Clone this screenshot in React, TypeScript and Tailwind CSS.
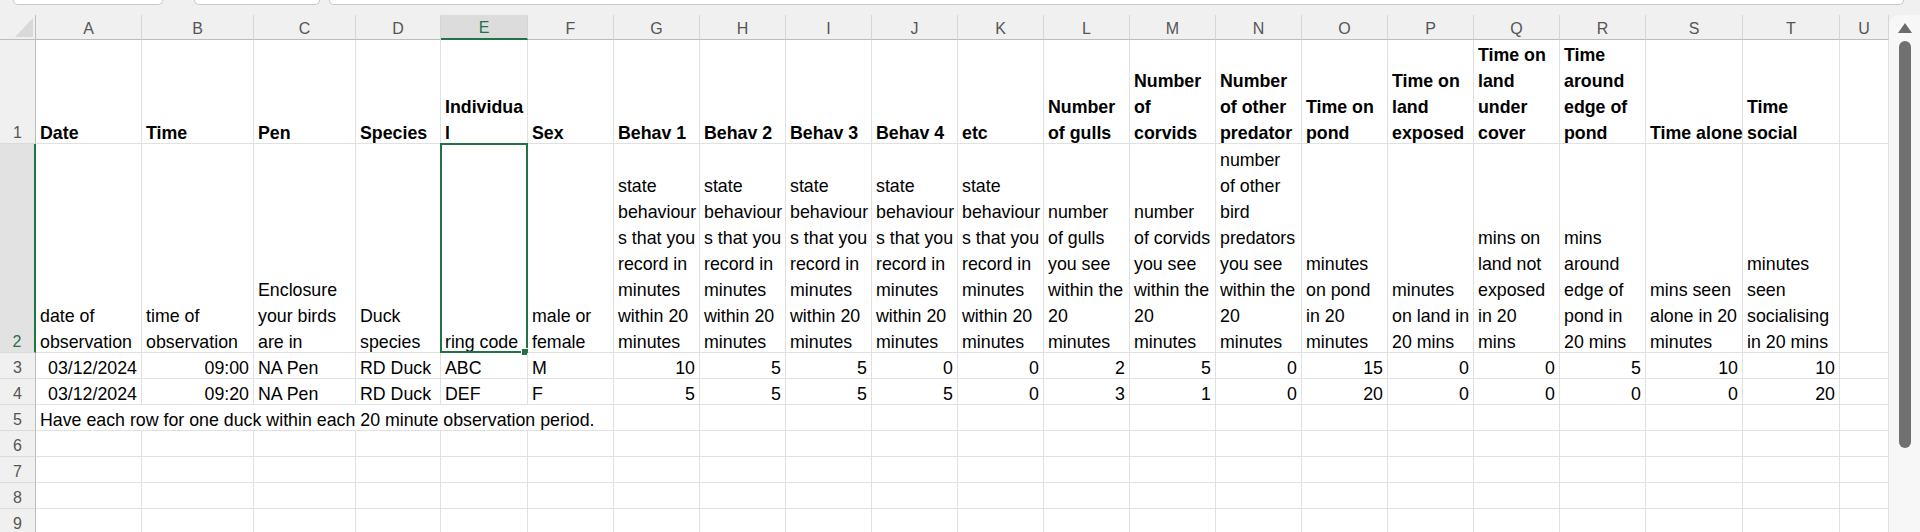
import { Fragment } from 'react'

type CellDef = {
  lines?: string[]
  bold?: boolean
  right?: boolean
  span?: number
}

const COLS = ['A', 'B', 'C', 'D', 'E', 'F', 'G', 'H', 'I', 'J', 'K', 'L', 'M', 'N', 'O', 'P', 'Q', 'R', 'S', 'T', 'U']

const h = (...lines: string[]): CellDef => ({ lines, bold: true })
const t = (...lines: string[]): CellDef => ({ lines })
const n = (v: string): CellDef => ({ lines: [v], right: true })
const empty = (): CellDef => ({})

const behaviour = () => t('state', 'behaviour', 's that you', 'record in', 'minutes', 'within 20', 'minutes')

const rows: CellDef[][] = [
  [
    h('Date'), h('Time'), h('Pen'), h('Species'), h('Individua', 'l'), h('Sex'),
    h('Behav 1'), h('Behav 2'), h('Behav 3'), h('Behav 4'), h('etc'),
    h('Number', 'of gulls'), h('Number', 'of', 'corvids'), h('Number', 'of other', 'predator'),
    h('Time on', 'pond'), h('Time on', 'land', 'exposed'), h('Time on', 'land', 'under', 'cover'),
    h('Time', 'around', 'edge of', 'pond'), h('Time alone'), h('Time', 'social'), empty(),
  ],
  [
    t('date of', 'observation'), t('time of', 'observation'), t('Enclosure', 'your birds', 'are in'),
    t('Duck', 'species'), t('ring code'), t('male or', 'female'),
    behaviour(), behaviour(), behaviour(), behaviour(), behaviour(),
    t('number', 'of gulls', 'you see', 'within the', '20', 'minutes'),
    t('number', 'of corvids', 'you see', 'within the', '20', 'minutes'),
    t('number', 'of other', 'bird', 'predators', 'you see', 'within the', '20', 'minutes'),
    t('minutes', 'on pond', 'in 20', 'minutes'),
    t('minutes', 'on land in', '20 mins'),
    t('mins on', 'land not', 'exposed', 'in 20', 'mins'),
    t('mins', 'around', 'edge of', 'pond in', '20 mins'),
    t('mins seen', 'alone in 20', 'minutes'),
    t('minutes', 'seen', 'socialising', 'in 20 mins'),
    empty(),
  ],
  [
    n('03/12/2024'), n('09:00'), t('NA Pen'), t('RD Duck'), t('ABC'), t('M'),
    n('10'), n('5'), n('5'), n('0'), n('0'), n('2'), n('5'), n('0'),
    n('15'), n('0'), n('0'), n('5'), n('10'), n('10'), empty(),
  ],
  [
    n('03/12/2024'), n('09:20'), t('NA Pen'), t('RD Duck'), t('DEF'), t('F'),
    n('5'), n('5'), n('5'), n('5'), n('0'), n('3'), n('1'), n('0'),
    n('20'), n('0'), n('0'), n('0'), n('0'), n('20'), empty(),
  ],
  [
    { lines: ['Have each row for one duck within each 20 minute observation period.'], span: 6 },
    ...Array.from({ length: 15 }, empty),
  ],
  Array.from({ length: 21 }, empty),
  Array.from({ length: 21 }, empty),
  Array.from({ length: 21 }, empty),
  Array.from({ length: 21 }, empty),
]

function Cell({ cell, selected }: { cell: CellDef; selected?: boolean }) {
  return (
    <div
      className={`relative flex flex-col justify-end px-[4px] border-r border-b border-[#e1e1e1] text-[17.8px] leading-[26px] text-black ${
        cell.right ? 'items-end' : 'items-start'
      } ${cell.bold ? 'font-bold' : ''} ${cell.span === 6 ? 'col-span-6' : ''}`}
    >
      {cell.lines && (
        <div className="-mb-[3px]">
          {cell.lines.map((line, i) => (
            <div key={i} className="whitespace-nowrap">
              {line}
            </div>
          ))}
        </div>
      )}
      {selected && (
        <>
          <div className="absolute -inset-px border-2 border-[#217346]" />
          <div className="absolute -right-[2px] -bottom-[4px] w-[8px] h-[8px] bg-[#217346] border border-white" />
        </>
      )}
    </div>
  )
}

export default function App() {
  return (
    <div className="w-[1920px] h-[532px] overflow-hidden bg-[#f0f0f0] font-['Liberation_Sans',Arial,sans-serif]">
      {/* name box / formula bar edges */}
      <div className="h-[15px] flex items-start">
        <div className="ml-[13px] w-[150px] h-[5px] bg-white border border-t-0 border-[#c8c8c8] rounded-b-[6px]" />
        <div className="ml-[31px] w-[126px] h-[5px] bg-white border border-t-0 border-[#c8c8c8] rounded-b-[6px]" />
        <div className="ml-[9px] w-[1575px] h-[5px] bg-white border border-t-0 border-[#c8c8c8] rounded-b-[6px]" />
      </div>

      <div className="flex">
        <div className="w-[1889px] bg-white grid grid-cols-[36px_106px_112px_102px_85px_87px_86px_86px_86px_86px_86px_86px_86px_86px_86px_86px_86px_86px_86px_97px_97px_1fr] grid-rows-[25px_104px_209px_26px_26px_26px_26px_26px_26px_26px]">
          {/* corner */}
          <div className="bg-[#f0f0f0] border-r border-b border-r-[#bdbdbd] border-b-[#bdbdbd] flex items-end justify-end pr-[2px] pb-[2px]">
            <svg width="18" height="19" viewBox="0 0 18 19">
              <polygon points="18,0 18,19 0,19" fill="#d9d9d9" />
            </svg>
          </div>
          {COLS.map((c) => (
            <div
              key={c}
              className={`flex items-end justify-center text-[16px] leading-[20px] border-r border-r-[#d6d6d6] ${
                c === 'E'
                  ? 'bg-[#dcdcdc] text-[#217346] border-b-2 border-b-[#217346]'
                  : 'bg-[#f0f0f0] text-[#555] border-b border-b-[#bdbdbd]'
              }`}
            >
              {c}
            </div>
          ))}

          {rows.map((row, ri) => (
            <Fragment key={ri}>
              <div
                className={`flex items-end justify-center text-[16px] leading-[26px] border-b border-b-[#dadada] ${
                  ri === 1
                    ? 'bg-[#e2e2e2] text-[#217346] border-r-2 border-r-[#217346]'
                    : 'bg-[#f0f0f0] text-[#555] border-r border-r-[#bdbdbd]'
                }`}
              >
                <div className="-mb-[3px]">{ri + 1}</div>
              </div>
              {row.map((cell, ci) => (
                <Cell key={ci} cell={cell} selected={ri === 1 && ci === 4} />
              ))}
            </Fragment>
          ))}
        </div>

        {/* vertical scrollbar */}
        <div className="flex-1 h-[517px] bg-[#f7f7f7] rounded-tl-[10px] flex flex-col items-center">
          <svg className="mt-[8px]" width="14" height="10" viewBox="0 0 14 10">
            <polygon points="7,0 14,10 0,10" fill="#6b6b6b" />
          </svg>
          <div className="mt-[8px] w-[12px] h-[407px] rounded-full bg-[#707070]" />
        </div>
      </div>
    </div>
  )
}
